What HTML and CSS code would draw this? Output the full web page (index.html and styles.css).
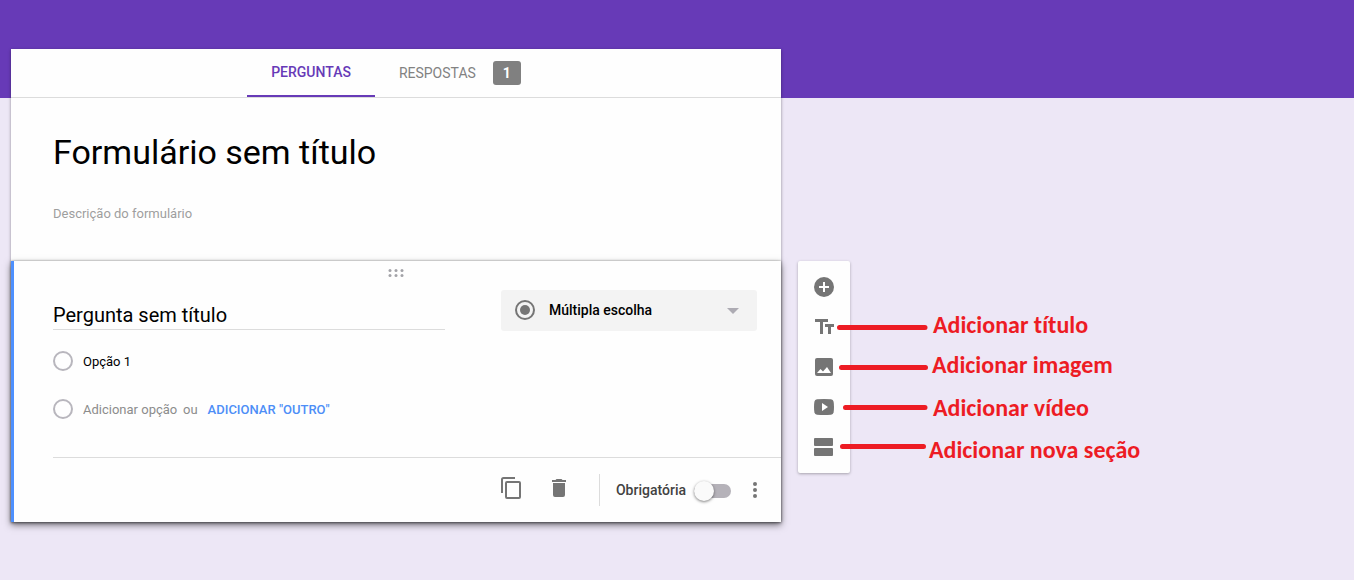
FILE: index.html
```html
<!DOCTYPE html>
<html lang="pt-BR">
<head>
<meta charset="utf-8">
<meta name="viewport" content="width=device-width, initial-scale=1">
<title>Formulário sem título</title>
<link rel="stylesheet" href="styles.css">
</head>
<body>
<div class="page">
  <main class="form">
    <nav class="tabs">
      <button class="tab tab-active" type="button">PERGUNTAS</button>
      <button class="tab" type="button">RESPOSTAS <span class="badge">1</span></button>
    </nav>
    <section class="intro">
      <input class="field form-title" type="text" value="Formulário sem título" aria-label="Título do formulário">
      <input class="field form-description" type="text" placeholder="Descrição do formulário" aria-label="Descrição do formulário">
    </section>
    <section class="question">
      <svg class="grip" width="16" height="8" viewBox="0 0 16 8" aria-hidden="true">
        <g fill="#a3a3a8"><circle cx="2" cy="1.500" r="1.500"/><circle cx="8" cy="1.500" r="1.500"/><circle cx="14" cy="1.500" r="1.500"/><circle cx="2" cy="6.500" r="1.500"/><circle cx="8" cy="6.500" r="1.500"/><circle cx="14" cy="6.500" r="1.500"/></g>
      </svg>
      <div class="question-head">
        <input class="field question-title" type="text" value="Pergunta sem título" aria-label="Pergunta">
        <div class="type">
          <svg class="type-icon" width="20" height="20" viewBox="0 0 20 20" aria-hidden="true"><circle cx="10" cy="10" r="9" fill="none" stroke="#757575" stroke-width="2"/><circle cx="10" cy="10" r="5" fill="#757575"/></svg>
          <select class="type-select" aria-label="Tipo de pergunta"><option>Múltipla escolha</option></select>
          <svg class="type-arrow" width="12" height="6" viewBox="0 0 12 6" aria-hidden="true"><path d="M0 0h12L6 6z" fill="#adabb3"/></svg>
        </div>
      </div>
      <div class="options">
        <div class="option">
          <input class="radio" type="radio" name="answer" aria-label="Opção 1">
          <input class="field option-text" type="text" value="Opção 1" aria-label="Texto da opção 1">
        </div>
        <div class="option">
          <input class="radio" type="radio" name="answer" aria-label="Nova opção">
          <input class="field option-add" type="text" placeholder="Adicionar opção" aria-label="Adicionar opção">
          <span class="option-or">ou</span>
          <button class="other" type="button">ADICIONAR "OUTRO"</button>
        </div>
      </div>
      <footer class="actions">
        <button class="icon-button" type="button" aria-label="Duplicar">
          <svg width="20" height="22" viewBox="0 0 20 22" fill="none" stroke="#757575" stroke-width="2"><path d="M1 16V2.500Q1 1 2.500 1H14"/><rect x="5" y="5" width="14" height="16" rx="1"/></svg>
        </button>
        <button class="icon-button" type="button" aria-label="Excluir">
          <svg width="14" height="18" viewBox="0 0 14 18" fill="#757575"><path d="M0 1h3.500l1-1h5l1 1H14v2H0zM1 4h12v12q0 2-2 2H3q-2 0-2-2z"/></svg>
        </button>
        <label class="required">Obrigatória <input class="switch" type="checkbox" role="switch"></label>
        <button class="more" type="button" aria-label="Mais opções">
          <svg width="4" height="16" viewBox="0 0 4 16" fill="#757575"><circle cx="2" cy="2" r="2"/><circle cx="2" cy="8" r="2"/><circle cx="2" cy="14" r="2"/></svg>
        </button>
      </footer>
    </section>
  </main>
  <aside class="toolbar">
    <button class="tool" type="button" aria-label="Adicionar pergunta">
      <svg width="20" height="20" viewBox="0 0 20 20"><circle cx="10" cy="10" r="10" fill="#757575"/><path d="M10 5v10M5 10h10" stroke="#fff" stroke-width="2"/></svg>
    </button>
    <button class="tool" type="button" aria-label="Adicionar título">
      <svg width="20" height="16" viewBox="0 0 20 16" fill="#757575"><path d="M1 0h13v3H9v12H6V3H1zM11 5h9v3h-3v7h-3V8h-3z"/></svg>
    </button>
    <button class="tool" type="button" aria-label="Adicionar imagem">
      <svg width="20" height="18" viewBox="0 0 20 18"><rect x="1" width="18" height="18" rx="2" fill="#757575"/><path d="M3 15l3.500-4 2.500 2.500L13 9l4 6z" fill="#fff"/></svg>
    </button>
    <button class="tool" type="button" aria-label="Adicionar vídeo">
      <svg width="20" height="16" viewBox="0 0 20 16"><path d="M3 .3q7-.6 14 0 2.200.3 2.600 2.500.8 5.200 0 10.400-.4 2.200-2.600 2.500-7 .6-14 0Q.8 15.400.4 13.200q-.8-5.200 0-10.400Q.8.600 3 .3z" fill="#757575"/><path d="M8 4v8l6-4z" fill="#fff"/></svg>
    </button>
    <button class="tool" type="button" aria-label="Adicionar nova seção">
      <svg width="20" height="18" viewBox="0 0 20 18" fill="#757575"><rect width="19" height="8" rx="1"/><rect y="10" width="19" height="8" rx="1"/></svg>
    </button>
    <div class="notes">
      <svg class="note-lines" width="140" height="212" viewBox="0 0 140 212" stroke="#ed1c24" stroke-width="5" stroke-linecap="round" aria-hidden="true"><path d="M41.500 66.500H127M43.500 106.500H127.500M47.500 146.500H127M44.500 185.500H125.500"/></svg>
      <span class="note note-title">Adicionar título</span>
      <span class="note note-image">Adicionar imagem</span>
      <span class="note note-video">Adicionar vídeo</span>
      <span class="note note-section">Adicionar nova seção</span>
    </div>
  </aside>
</div>
</body>
</html>
```
FILE: styles.css
```css
* { box-sizing: border-box; }

body {
  margin: 0;
  min-height: 100vh;
  background: linear-gradient(#673ab7 98px, #ede7f6 98px) no-repeat #ede7f6;
  font-family: Roboto, "Liberation Sans", sans-serif;
  font-size: 13px;
  color: #000;
}

button, input, select { font: inherit; color: inherit; }
button { padding: 0; border: 0; background: none; cursor: pointer; }
svg { display: block; flex: none; }

.page {
  display: flex;
  align-items: flex-start;
  gap: 17px;
  padding: 49px 11px 58px;
}

.form {
  flex: 0 1 770px;
  min-width: 0;
  background: #fefefe;
  box-shadow: 0 1px 3px rgba(0, 0, 0, .4);
}

.tabs {
  display: flex;
  justify-content: center;
  height: 49px;
  border-bottom: 1px solid #dcdcdc;
}

.tab {
  display: flex;
  align-items: center;
  gap: 17px;
  height: 48px;
  padding: 0 24px;
  font-size: 14px;
  color: #828282;
}

.tab-active {
  border-bottom: 2px solid #673ab7;
  font-weight: 500;
  color: #673ab7;
}

.badge {
  width: 28px;
  border-radius: 3px;
  background: #808080;
  font-weight: 700;
  line-height: 24px;
  color: #fff;
}

.field {
  display: block;
  min-width: 0;
  padding: 0;
  border: 0;
  outline: 0;
  background: none;
}

.field::placeholder { color: #9e9e9e; opacity: 1; }

.intro {
  display: flex;
  flex-direction: column;
  gap: 29px;
  padding: 30px 42px 39px;
}

.form-title { height: 48px; font-size: 34px; }
.form-description { height: 17px; }

.question {
  position: relative;
  padding: 8px 0 0 39px;
  border-left: 3px solid #4d90fe;
  background: #fefefe;
  box-shadow: 0 0 2px rgba(0, 0, 0, .4), 0 3px 7px rgba(0, 0, 0, .5);
}

.grip { margin: 0 auto; position: relative; right: 21px; }

.question-head {
  display: flex;
  justify-content: space-between;
  align-items: flex-start;
  gap: 56px;
  padding: 13px 24px 0 0;
}

.question-title {
  flex: 1;
  height: 40px;
  padding-top: 10px;
  border-bottom: 1px solid #dcdcdc;
  font-size: 20px;
}

.type { position: relative; flex: 0 0 256px; }

.type-select {
  display: block;
  width: 100%;
  height: 41px;
  padding: 0 40px 2px 48px;
  border: 0;
  border-radius: 3px;
  background: #f3f3f3;
  appearance: none;
  font-size: 14px;
  font-weight: 500;
}

.type-icon { position: absolute; top: 10px; left: 14px; pointer-events: none; }
.type-arrow { position: absolute; top: 18px; right: 18px; pointer-events: none; }

.options {
  display: flex;
  flex-direction: column;
  gap: 28px;
  padding: 20px 0 38px;
}

.option { display: flex; align-items: center; }

.radio {
  flex: none;
  width: 20px;
  height: 20px;
  margin: 0 10px 0 0;
  border: 2px solid #b8b6bd;
  border-radius: 50%;
  appearance: none;
}

.option-text { width: 300px; height: 20px; }
.option-add { width: 100px; height: 20px; }
.option-add::placeholder { color: #8c8c8c; }
.option-or { color: #8c8c8c; }
.other { margin-left: 10px; font-weight: 500; color: #4d8ef7; }

.actions {
  display: flex;
  align-items: center;
  justify-content: flex-end;
  height: 65px;
  padding-right: 24px;
  border-top: 1px solid #dcdcdc;
}

.icon-button {
  display: grid;
  place-items: center;
  width: 48px;
  height: 48px;
  padding-bottom: 4px;
}

.required {
  display: flex;
  align-items: center;
  gap: 8px;
  height: 32px;
  margin-left: 16px;
  padding-left: 16px;
  border-left: 1px solid #dcdcdc;
  font-size: 14px;
  font-weight: 500;
  color: #424242;
}

.switch {
  position: relative;
  width: 37px;
  height: 14px;
  margin: 2px 0 0;
  border-radius: 7px;
  background: #b5b2b9;
  appearance: none;
}

.switch::before {
  content: "";
  position: absolute;
  top: -3px;
  left: 0;
  width: 20px;
  height: 20px;
  border-radius: 50%;
  background: #fafafa;
  box-shadow: 0 1px 3px rgba(0, 0, 0, .5);
}

.more { margin-left: 22px; }

.toolbar {
  position: relative;
  flex: 0 0 52px;
  margin-top: 212px;
  padding: 6px 0;
  border-radius: 2px;
  background: #fefefe;
  box-shadow: 0 1px 3px rgba(0, 0, 0, .3);
}

.tool {
  display: grid;
  place-items: center;
  width: 100%;
  height: 40px;
}

/* Callouts drawn over the toolbar */
.notes { position: absolute; top: 0; left: 0; pointer-events: none; }

.note {
  position: absolute;
  font-family: Carlito, Lato, sans-serif;
  font-size: 24px;
  font-weight: 700;
  font-variant-ligatures: none;
  line-height: 28px;
  white-space: nowrap;
  color: #ed1c24;
}

.note-title { top: 50px; left: 135px; }
.note-image { top: 90px; left: 134px; }
.note-video { top: 133px; left: 135px; }
.note-section { top: 175px; left: 131px; }
```
